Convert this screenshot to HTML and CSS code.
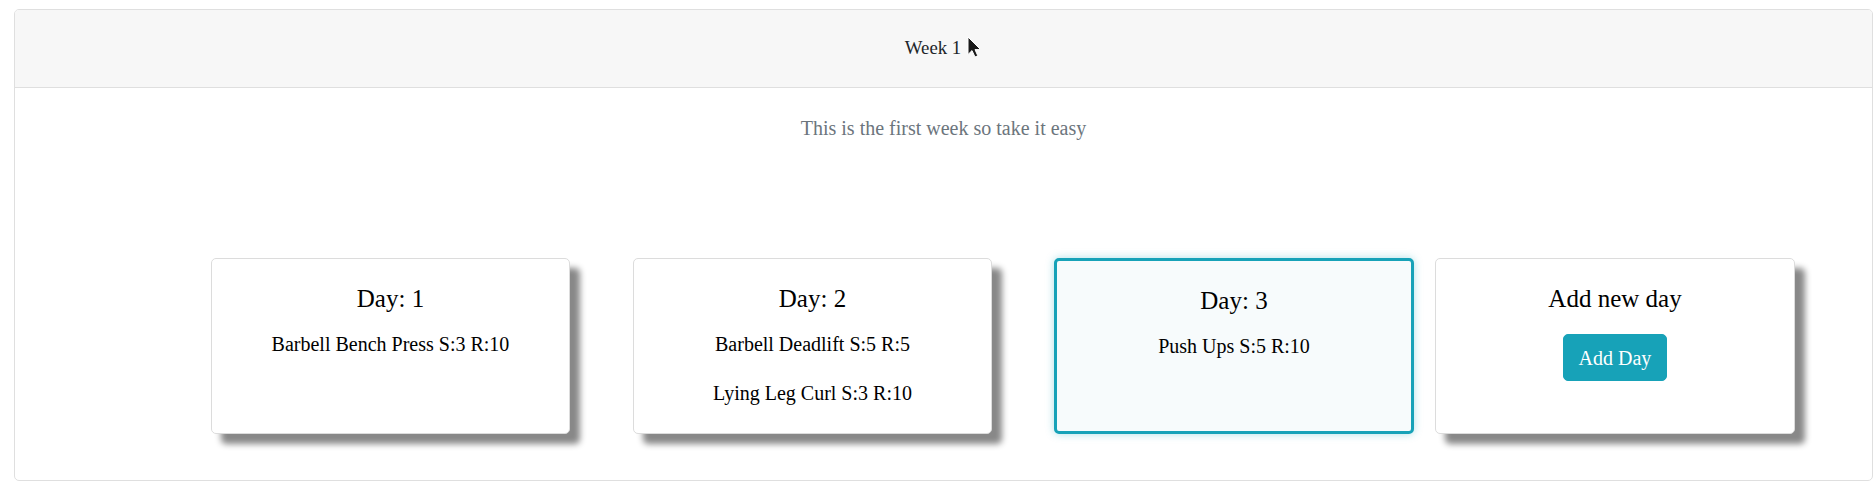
FILE: index.html
```html
<!DOCTYPE html>
<html>
<head>
<meta charset="utf-8">
<link rel="stylesheet" href="styles.css">
</head>
<body>
<div class="week-card">
  <div class="week-header">
    <span class="week-title">Week 1</span>
    <svg class="cursor" width="15" height="22" viewBox="0 0 15 22"><path d="M1 1 L1 18.5 L5 14.6 L8 21 L10.8 19.8 L8 13.6 L13.6 13.6 Z" fill="#1a1a1a" stroke="#fff" stroke-width="1" stroke-linejoin="round"/></svg>
  </div>
  <div class="week-body">
    <p class="week-desc">This is the first week so take it easy</p>
    <div class="days">
      <div class="day day-1">
        <h5 class="day-title">Day: 1</h5>
        <p class="exercise">Barbell Bench Press S:3 R:10</p>
      </div>
      <div class="day day-2">
        <h5 class="day-title">Day: 2</h5>
        <p class="exercise">Barbell Deadlift S:5 R:5</p>
        <p class="exercise">Lying Leg Curl S:3 R:10</p>
      </div>
      <div class="day day-active">
        <h5 class="day-title">Day: 3</h5>
        <p class="exercise">Push Ups S:5 R:10</p>
      </div>
      <div class="day day-add">
        <h5 class="day-title">Add new day</h5>
        <button class="btn-add">Add Day</button>
      </div>
    </div>
  </div>
</div>
</body>
</html>
```

FILE: styles.css
```css
* { box-sizing: border-box; }
html, body { margin: 0; padding: 0; background: #fff; }
body {
  font-family: "Liberation Serif", "Times New Roman", serif;
  font-size: 20px;
  line-height: 1.5;
  color: #212529;
  padding: 9px 1px 0 14px;
}
.week-card {
  border: 1px solid #dfdfdf;
  border-radius: 5px;
  height: 472px;
  overflow: hidden;
}
.week-header {
  background: #f7f7f7;
  border-bottom: 1px solid #dfdfdf;
  height: 78px;
  display: flex;
  align-items: center;
  justify-content: center;
}
.week-title {
  font-size: 18.75px;
  color: #212529;
}
.cursor {
  margin-left: 6px;
  margin-top: -4px;
}
.week-body {
  padding: 25px 0 0 0;
}
.week-desc {
  margin: 0;
  text-align: center;
  color: #6c757d;
  line-height: 30px;
}
.days {
  display: flex;
  align-items: stretch;
  margin-top: 115px;
  padding-left: 196px;
}
.day {
  width: 359px;
  height: 176px;
  border: 1px solid #dcdcdc;
  border-radius: 5px;
  background: #fff;
  padding: 25px 20px;
  text-align: center;
  color: #000;
  box-shadow: 10px 10px 6px #888;
  display: flex;
  flex-direction: column;
  align-items: center;
}
.day-1 { margin-right: 63px; }
.day-2 { margin-right: 62px; }
.day-active {
  width: 360px;
  margin-right: 21px;
  border: 3px solid #17a2b8;
  background: #f7fbfc;
  box-shadow: 0 0 8px rgba(23, 162, 184, 0.35);
}
.day-add { width: 360px; }
.day-title {
  margin: 0 0 15px 0;
  font-size: 25px;
  font-weight: normal;
  line-height: 30px;
}
.exercise {
  margin: 0 0 19px 0;
  line-height: 30px;
}
.btn-add {
  margin-top: 5px;
  font-family: inherit;
  font-size: 20px;
  line-height: 30px;
  color: #fff;
  background: #17a2b8;
  border: 1px solid #17a2b8;
  border-radius: 5px;
  padding: 7.5px 15px;
  height: 47px;
}
```
